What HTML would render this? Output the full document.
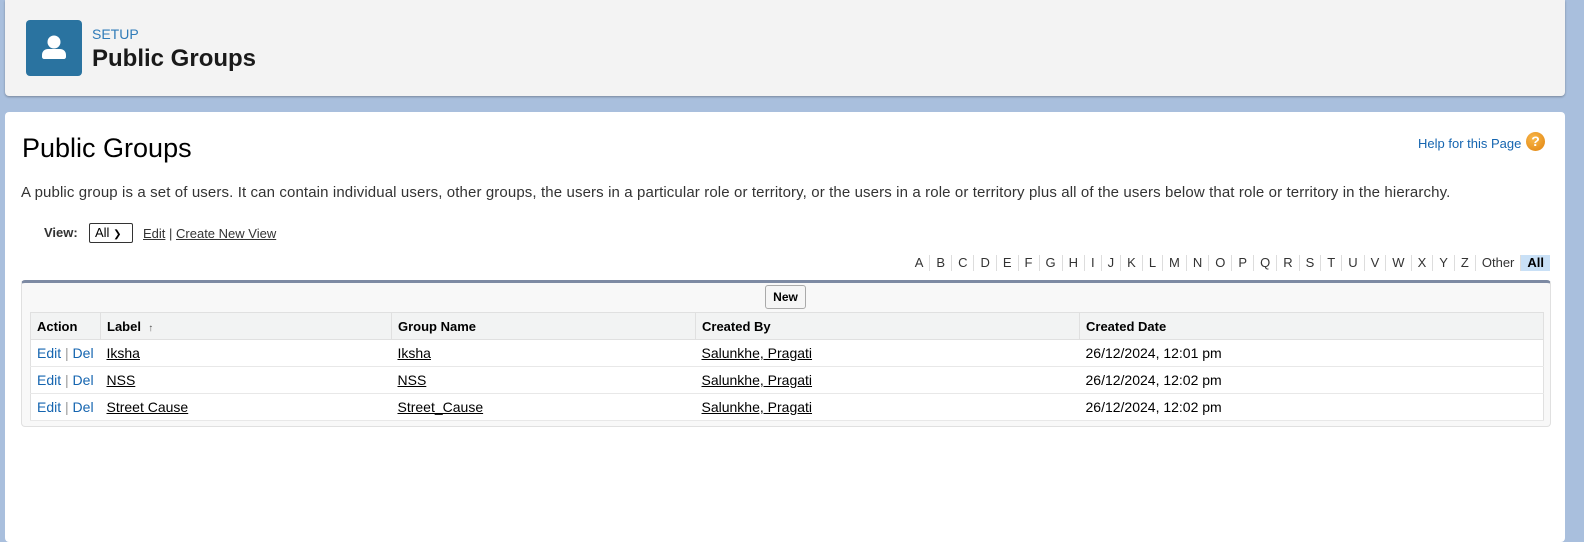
<!DOCTYPE html>
<html><head><style>
body{margin:0;width:1584px;height:531px;overflow:hidden;background:#a9bfdd;font-family:"Liberation Sans",Arial,sans-serif;position:relative}
.hdr{position:absolute;left:5px;top:0;width:1560px;height:96px;background:#f3f3f3;border-radius:0 0 4px 4px;box-shadow:0 1px 2px rgba(0,0,0,.3)}
.ico{position:absolute;left:26px;top:20px;width:56px;height:56px;background:#2a73a0;border-radius:4px}
.setup{position:absolute;left:92px;top:26px;font-size:14px;color:#2f7bb8}
.ttl{position:absolute;left:92px;top:45px;font-size:24px;font-weight:bold;color:#1a1a1a}
.card{position:absolute;left:5px;top:112px;width:1560px;height:430px;background:#fff;border-radius:4px}
.h1{position:absolute;left:22px;top:133px;font-size:27px;color:#000}
.help{position:absolute;left:1418px;top:136px;font-size:13px;color:#1565b0}
.q{position:absolute;left:1526px;top:132px;width:19px;height:19px;border-radius:50%;background:radial-gradient(circle at 40% 35%,#f9b84a,#e0820e);color:#fff;font-weight:bold;font-size:14px;text-align:center;line-height:19px}
.desc{position:absolute;left:21px;top:184px;font-size:15px;color:#333;white-space:nowrap;letter-spacing:0.12px}
.view{position:absolute;left:44px;top:225px;font-size:13px;color:#333;font-weight:bold}
.sel{position:absolute;left:89px;top:223px;width:44px;height:20px;border:1px solid #333;border-radius:2px;font-size:13px;line-height:18px;padding-left:5px;box-sizing:border-box}
.vl{position:absolute;left:143px;top:226px;font-size:13px;color:#333}
.vl u{color:#333}
.alpha{position:absolute;right:34px;top:255px;font-size:13px;color:#333;display:flex}
.alpha span{padding:0 6px;border-left:1px solid #ddd;line-height:16px}
.alpha span:first-child{border:none}
.alpha .all{background:#c9e0f6;font-weight:bold;color:#000}
.box{position:absolute;left:21px;top:280px;width:1530px;height:147px;background:#f8f8f8;border:1px solid #e0e0e0;border-top:3px solid #7d8aa3;border-radius:4px;box-sizing:border-box}
.new{position:absolute;left:765px;top:285px;width:41px;height:24px;border:1px solid #aaa;border-radius:3px;background:#f6f6f6;font-size:12px;font-weight:bold;text-align:center;line-height:22px;box-sizing:border-box}
table{position:absolute;left:30px;top:312px;width:1514px;border-collapse:collapse;font-size:14px;background:#fff;border:1px solid #e0e0e0}
th{background:#f2f3f3;text-align:left;font-size:13px;height:26px;padding:0 6px;border-left:1px solid #e0e0e0;border-bottom:1px solid #e0e0e0;color:#000}
td{height:26px;padding:0 6px;border-bottom:1px solid #e8e8e8;color:#000}
td u{color:#000}
.a{color:#1565b0}
</style></head><body>
<div class="hdr"></div>
<div class="ico"><svg width="56" height="56" viewBox="0 0 56 56"><circle cx="28" cy="22" r="6.5" fill="#fff"/><path d="M16 35c0-4 3-6 6-6h12c3 0 6 2 6 6v2c0 1-1 2-2 2H18c-1 0-2-1-2-2z" fill="#fff"/></svg></div>
<div class="setup">SETUP</div>
<div class="ttl">Public Groups</div>
<div class="card"></div>
<div class="h1">Public Groups</div>
<div class="help">Help for this Page</div><div class="q">?</div>
<div class="desc">A public group is a set of users. It can contain individual users, other groups, the users in a particular role or territory, or the users in a role or territory plus all of the users below that role or territory in the hierarchy.</div>
<div class="view">View:</div>
<div class="sel">All <span style="font-size:10px">&#10095;</span></div>
<div class="vl"><u>Edit</u> | <u>Create New View</u></div>
<div class="alpha"><span>A</span><span>B</span><span>C</span><span>D</span><span>E</span><span>F</span><span>G</span><span>H</span><span>I</span><span>J</span><span>K</span><span>L</span><span>M</span><span>N</span><span>O</span><span>P</span><span>Q</span><span>R</span><span>S</span><span>T</span><span>U</span><span>V</span><span>W</span><span>X</span><span>Y</span><span>Z</span><span>Other</span><span class="all">All</span></div>
<div class="box"></div>
<div class="new">New</div>
<table>
<tr><th style="width:57px;border-left:none">Action</th><th style="width:278px">Label &nbsp;<span style="font-size:10px;color:#555">&#8593;</span></th><th style="width:291px">Group Name</th><th style="width:371px">Created By</th><th>Created Date</th></tr>
<tr><td><span class="a">Edit</span> <span style="color:#999">|</span> <span class="a">Del</span></td><td><u>Iksha</u></td><td><u>Iksha</u></td><td><u>Salunkhe, Pragati</u></td><td>26/12/2024, 12:01 pm</td></tr>
<tr><td><span class="a">Edit</span> <span style="color:#999">|</span> <span class="a">Del</span></td><td><u>NSS</u></td><td><u>NSS</u></td><td><u>Salunkhe, Pragati</u></td><td>26/12/2024, 12:02 pm</td></tr>
<tr><td><span class="a">Edit</span> <span style="color:#999">|</span> <span class="a">Del</span></td><td><u>Street Cause</u></td><td><u>Street_Cause</u></td><td><u>Salunkhe, Pragati</u></td><td>26/12/2024, 12:02 pm</td></tr>
</table>
</body></html>
